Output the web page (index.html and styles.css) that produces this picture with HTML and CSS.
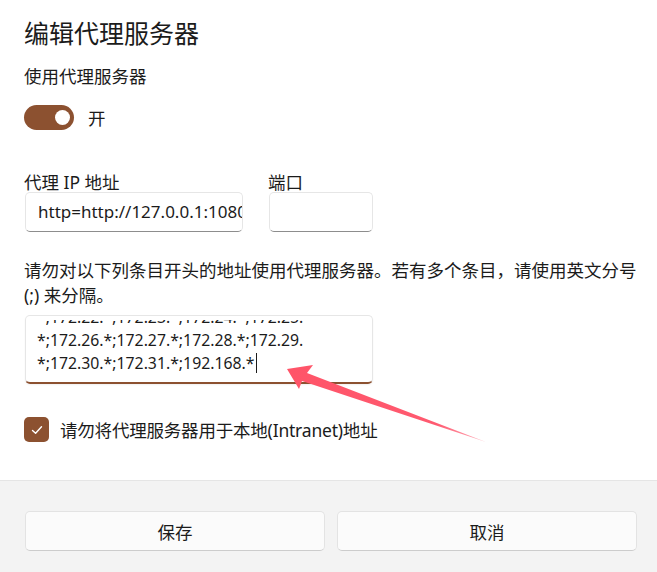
FILE: index.html
```html
<!DOCTYPE html>
<html lang="zh-CN">
<head>
<meta charset="utf-8">
<title>编辑代理服务器</title>
<link rel="stylesheet" href="styles.css">
</head>
<body>
<div class="dialog">
  <div class="content">
    <h1 class="title">编辑代理服务器</h1>
    <div class="section-label">使用代理服务器</div>
    <div class="toggle-row">
      <div class="toggle"><span class="knob"></span></div>
      <span class="toggle-text">开</span>
    </div>
    <div class="fields">
      <div class="field">
        <div class="field-label">代理 IP 地址</div>
        <div class="input input-addr">http=http://127.0.0.1:1080</div>
      </div>
      <div class="field">
        <div class="field-label">端口</div>
        <div class="input input-port"></div>
      </div>
    </div>
    <p class="desc">请勿对以下列条目开头的地址使用代理服务器。若有多个条目，请使用英文分号<br>(;) 来分隔。</p>
    <div class="textarea">
      <div class="ta-scroll">
        <div class="ta-line">*;172.22.*;172.23.*;172.24.*;172.25.</div>
        <div class="ta-line">*;172.26.*;172.27.*;172.28.*;172.29.</div>
        <div class="ta-line">*;172.30.*;172.31.*;192.168.*<span class="caret"></span></div>
      </div>
    </div>
    <div class="check-row">
      <div class="checkbox">
        <svg width="14" height="14" viewBox="0 0 14 14"><path d="M2.5 7.4 L5.6 10.3 L11.5 3.8" fill="none" stroke="#fff" stroke-width="1.4" stroke-linecap="round" stroke-linejoin="round"/></svg>
      </div>
      <span class="check-text">请勿将代理服务器用于本地(Intranet)地址</span>
    </div>
  </div>
  <div class="footer">
    <button class="btn">保存</button>
    <button class="btn">取消</button>
  </div>
</div>
<svg class="arrow" width="657" height="572" viewBox="0 0 657 572">
  <defs>
    <linearGradient id="ag" x1="287" y1="370" x2="486" y2="442" gradientUnits="userSpaceOnUse">
      <stop offset="0" stop-color="#ff5468"/>
      <stop offset="0.75" stop-color="#ff5a70"/>
      <stop offset="1" stop-color="#ffb0bc"/>
    </linearGradient>
  </defs>
  <polygon points="287,369 313,365 307,373 486,442 302,381 299,389" fill="url(#ag)"/>
</svg>
</body>
</html>
```
FILE: styles.css
```css
html, body {
  margin: 0;
  padding: 0;
}
body {
  width: 657px;
  height: 572px;
  overflow: hidden;
  background: #ffffff;
  font-family: "Noto Sans", "Noto Sans CJK SC", sans-serif;
  color: #1b1b1b;
  position: relative;
}
.dialog {
  height: 572px;
  display: flex;
  flex-direction: column;
}
.content {
  flex: 1;
  padding: 16px 20px 0 24px;
}
.title {
  margin: 0;
  font-size: 25px;
  font-weight: 400;
  line-height: 34px;
}
.section-label {
  margin-top: 14px;
  font-size: 17.5px;
  line-height: 25px;
}
.toggle-row {
  margin-top: 16px;
  display: flex;
  align-items: center;
  height: 25px;
}
.toggle {
  width: 50px;
  height: 25px;
  box-sizing: border-box;
  border-radius: 13px;
  background: #8c5130;
  display: flex;
  align-items: center;
  justify-content: flex-end;
  padding-right: 4px;
}
.knob {
  width: 15px;
  height: 15px;
  border-radius: 50%;
  background: #ffffff;
}
.toggle-text {
  margin-left: 14px;
  font-size: 17.5px;
}
.fields {
  margin-top: 42px;
  display: flex;
  gap: 26px;
  padding-left: 1px;
}
.field-label {
  font-size: 17.5px;
  line-height: 20px;
  margin-left: -1px;
}
.input {
  box-sizing: border-box;
  height: 40px;
  border: 1px solid #e6e6e6;
  border-bottom-color: #8d8d8d;
  border-radius: 5px;
  background: #fff;
  font-size: 17px;
  line-height: 38px;
  padding-left: 12px;
  white-space: nowrap;
  overflow: hidden;
  color: #1b1b1b;
}
.input-addr { width: 218px; }
.input-port { width: 104px; }
.desc {
  margin: 26px 0 0 0;
  font-size: 17.5px;
  line-height: 25px;
  white-space: nowrap;
}
.textarea {
  margin-top: 7px;
  margin-left: 1px;
  width: 348px;
  height: 69px;
  box-sizing: border-box;
  border: 1px solid #e6e6e6;
  border-bottom: 2px solid #8c5130;
  border-radius: 5px;
  padding: 4px 0 7px 11px;
  box-shadow: 0 1px 2px rgba(0,0,0,0.06);
}
.ta-scroll {
  height: 100%;
  display: flex;
  flex-direction: column;
  justify-content: flex-end;
  overflow: hidden;
  font-size: 15.8px;
  line-height: 23px;
}
.ta-line {
  white-space: nowrap;
  flex-shrink: 0;
}
.caret {
  display: inline-block;
  width: 1px;
  height: 20px;
  background: #1b1b1b;
  vertical-align: -4px;
  margin-left: 1px;
}
.check-row {
  margin-top: 33px;
  display: flex;
  align-items: center;
}
.checkbox {
  width: 25px;
  height: 25px;
  border-radius: 5px;
  background: #8c5130;
  display: flex;
  align-items: center;
  justify-content: center;
}
.check-text {
  margin-left: 11px;
  font-size: 17.5px;
  letter-spacing: -0.2px;
}
.footer {
  height: 92px;
  box-sizing: border-box;
  border-top: 1px solid #e5e5e5;
  background: #f3f3f3;
  display: flex;
  gap: 12px;
  padding: 30px 20px 0 25px;
}
.btn {
  width: 300px;
  height: 40px;
  box-sizing: border-box;
  border: 1px solid #e3e3e3;
  border-bottom-color: #cccccc;
  border-radius: 5px;
  background: #fbfbfb;
  font-family: "Noto Sans", "Noto Sans CJK SC", sans-serif;
  font-size: 17.5px;
  color: #1b1b1b;
  padding: 0;
}
.arrow {
  position: absolute;
  left: 0;
  top: 0;
  pointer-events: none;
}
```
